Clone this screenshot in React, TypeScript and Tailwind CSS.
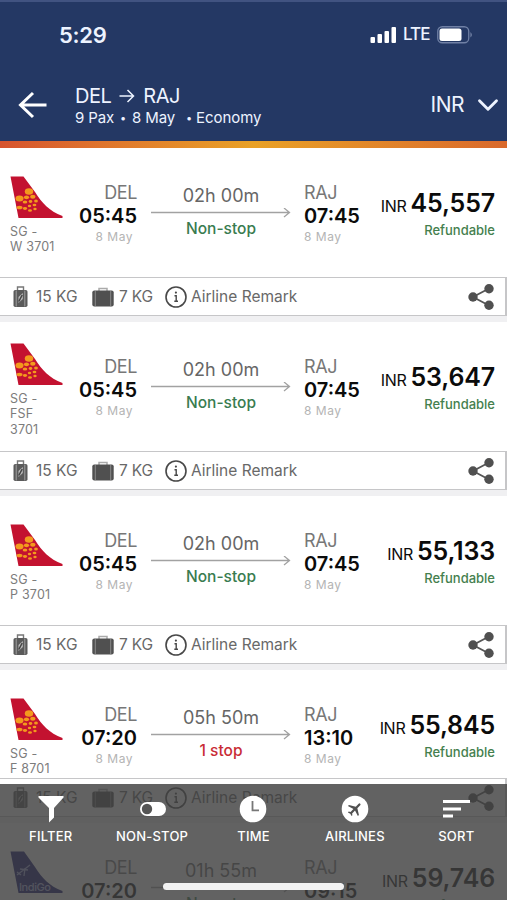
import React from "react";
import { ChevronDown } from "lucide-react";

type Flight = {
  code: string[];
  dep: string;
  arr: string;
  duration: string;
  stops: string;
  price: string;
  bodyClass: string;
  logoClass: string;
  indigo?: boolean;
};

const flights: Flight[] = [
  { code: ["SG -", "W 3701"], dep: "05:45", arr: "07:45", duration: "02h 00m", stops: "Non-stop", price: "45,557", bodyClass: "h-[129px]", logoClass: "pt-7" },
  { code: ["SG -", "FSF", "3701"], dep: "05:45", arr: "07:45", duration: "02h 00m", stops: "Non-stop", price: "53,647", bodyClass: "h-[129px]", logoClass: "pt-[21px]" },
  { code: ["SG -", "P 3701"], dep: "05:45", arr: "07:45", duration: "02h 00m", stops: "Non-stop", price: "55,133", bodyClass: "h-[129px]", logoClass: "pt-7" },
  { code: ["SG -", "F 8701"], dep: "07:20", arr: "13:10", duration: "05h 50m", stops: "1 stop", price: "55,845", bodyClass: "h-[108px]", logoClass: "pt-7" },
  { code: [], dep: "07:20", arr: "09:15", duration: "01h 55m", stops: "Non-stop", price: "59,746", bodyClass: "h-[129px]", logoClass: "pt-7", indigo: true },
];

function SpiceTail() {
  return (
    <svg width="53" height="43" viewBox="0 0 53 43">
      <path d="M0.500 0.500H13.500L25 16C32 27 39 35 52.500 40V42H8.500Z" fill="#c31230" />
      <g fill="#f39a1d">
        <ellipse cx="19" cy="15.500" rx="4.200" ry="3.200" />
        <ellipse cx="9.500" cy="22.500" rx="4" ry="3" />
        <ellipse cx="16.500" cy="21.300" rx="2.600" ry="1.900" />
        <ellipse cx="22.800" cy="20.800" rx="2.700" ry="2" />
        <ellipse cx="15" cy="26" rx="2.300" ry="1.600" />
        <ellipse cx="20.500" cy="25.500" rx="1.800" ry="1.400" />
        <ellipse cx="26" cy="25" rx="1.900" ry="1.600" />
        <ellipse cx="9.500" cy="31.500" rx="3" ry="1.800" />
        <ellipse cx="24.500" cy="29" rx="1.900" ry="1.300" />
        <ellipse cx="19.500" cy="30" rx="1.700" ry="1.300" />
        <ellipse cx="15" cy="32.500" rx="2.100" ry="1.400" />
        <ellipse cx="20" cy="34.500" rx="2" ry="1.300" />
        <ellipse cx="25" cy="33" rx="1.700" ry="1.200" />
      </g>
    </svg>
  );
}

function IndigoTail() {
  return (
    <svg width="53" height="43" viewBox="0 0 53 43">
      <path d="M0.500 0.500H14L25 16C32 27 39 35 52.500 40V42H8.500Z" fill="#10106f" />
      <path d="M7 24L20 14M10 18L18 19M15 17L14 25M7 21L11 24" stroke="#9aa3da" strokeWidth="1.300" fill="none" />
      <text x="9" y="40" fontFamily="Inter, sans-serif" fontSize="11" fontWeight="500" fill="#aab0e4" textLength="32">IndiGo</text>
    </svg>
  );
}

function CheckedBag() {
  return (
    <svg width="15" height="22" viewBox="0 0 15 22">
      <path d="M4.500 4.500V1H10.500V4.500" fill="none" stroke="#777" strokeWidth="1.400" />
      <rect x="0.500" y="4" width="14" height="17" rx="1.800" fill="#5a5a5a" />
      <path d="M3.200 4.500V20.500M11.800 4.500V20.500" stroke="#a8a8a8" strokeWidth="0.900" />
      <path d="M9.800 7L5.500 11V17L9.800 13Z" fill="#bdbdbd" />
      <path d="M5.800 15.500L9.200 9" stroke="#444" strokeWidth="1.600" />
    </svg>
  );
}

function CabinBag() {
  return (
    <svg width="22" height="20" viewBox="0 0 22 20">
      <path d="M7 4V1.500H15V4" fill="none" stroke="#aaa" strokeWidth="1.500" />
      <rect x="0.300" y="3.500" width="21.400" height="16" rx="2" fill="#505050" />
      <path d="M3.300 4V19.500M18.700 4V19.500" stroke="#999" strokeWidth="0.800" />
    </svg>
  );
}

function InfoIcon() {
  return (
    <svg width="22" height="22" viewBox="0 0 22 22">
      <circle cx="11" cy="11" r="10" fill="none" stroke="#484848" strokeWidth="1.600" />
      <circle cx="10.900" cy="6.600" r="1.100" fill="#484848" />
      <path d="M9.500 9.700H11.200V15.300M9.300 15.300H13" fill="none" stroke="#484848" strokeWidth="1.400" />
    </svg>
  );
}

function ShareIcon() {
  return (
    <svg width="28" height="28" viewBox="0 0 28 28">
      <path d="M22 5.500L6 14L22 22.500" fill="none" stroke="#555" strokeWidth="1.800" />
      <g fill="#505050">
        <circle cx="22" cy="5.700" r="4.700" />
        <circle cx="6" cy="14" r="4.700" />
        <circle cx="22" cy="22.300" r="4.700" />
      </g>
    </svg>
  );
}

function FlightCard({ f }: { f: Flight }) {
  return (
    <article className="shrink-0 border-b-[6px] border-[#f0f0f2] bg-white">
      <div className={`flex overflow-hidden pl-[10px] pr-3 ${f.bodyClass}`}>
        <div className={`w-[58px] shrink-0 ${f.logoClass}`}>
          {f.indigo ? <IndigoTail /> : <SpiceTail />}
          <div className="pt-[5px] text-[12.500px] leading-[15.300px] tracking-[0.200px] text-[#7c7c7c]">
            {f.code.map((line) => (
              <div key={line}>{line}</div>
            ))}
          </div>
        </div>
        <div className="flex w-[69px] shrink-0 flex-col items-end pt-[34px]">
          <span className="text-[18px] leading-[22px] tracking-[-0.400px] text-[#777]">DEL</span>
          <span className="text-[20px] font-semibold leading-6 text-[#0b0b0b]">{f.dep}</span>
          <span className="pr-1 pt-[1px] text-[12px] leading-4 tracking-[0.500px] text-[#b4b4b4]">8 May</span>
        </div>
        <div className="ml-[14px] flex w-[140px] shrink-0 flex-col items-center pt-[37px]">
          <span className="text-[18px] leading-[22px] text-[#666]">{f.duration}</span>
          <svg className="my-[1px] shrink-0" width="140" height="10" viewBox="0 0 140 10">
            <path d="M0 4.500H138M133 0L138.500 4.500L133 9" fill="none" stroke="#a2a2a2" strokeWidth="1.300" />
          </svg>
          <span className={`text-[15.500px] font-medium leading-[20px] ${f.stops === "1 stop" ? "text-[#c92d36]" : "text-[#397c50]"}`}>{f.stops}</span>
        </div>
        <div className="ml-[13px] flex w-[64px] shrink-0 flex-col items-start pt-[34px]">
          <span className="text-[18px] leading-[22px] tracking-[-0.400px] text-[#777]">RAJ</span>
          <span className="text-[20px] font-semibold leading-6 text-[#0b0b0b]">{f.arr}</span>
          <span className="pt-[1px] text-[12px] leading-4 tracking-[0.500px] text-[#b4b4b4]">8 May</span>
        </div>
        <div className="flex grow flex-col items-end pt-10">
          <div className="flex items-baseline gap-1 whitespace-nowrap leading-[30px] text-[#0b0b0b]">
            <span className="text-[16px] tracking-[-0.300px]">INR</span>
            <span className="text-[25px] font-semibold tracking-[-0.150px]">{f.price}</span>
          </div>
          <span className="pt-[1px] text-[13px] font-medium leading-4 text-[#457f4e]">Refundable</span>
        </div>
      </div>
      <div className="flex h-[39px] items-center border-y border-r-2 border-[#c6c6c8] pl-[13px] pr-[10px] pt-px text-[15.500px] text-[#686868]">
        <CheckedBag />
        <span className="ml-2 w-[56px] whitespace-nowrap">15 KG</span>
        <CabinBag />
        <span className="ml-[5px] w-[46px] whitespace-nowrap tracking-[-0.200px]">7 KG</span>
        <InfoIcon />
        <span className="ml-1 grow">Airline Remark</span>
        <ShareIcon />
      </div>
    </article>
  );
}

const tabs: { label: string; icon: React.ReactNode }[] = [
  {
    label: "FILTER",
    icon: (
      <svg width="26" height="28" viewBox="0 0 26 28">
        <path d="M0.500 1H25.500V2.500L16 13V22.500L11 27.500V13L0.500 2.500Z" fill="#fff" />
      </svg>
    ),
  },
  {
    label: "NON-STOP",
    icon: (
      <svg className="ml-[2px]" width="28" height="28" viewBox="0 0 28 28">
        <rect x="1" y="7" width="26" height="14" rx="7" fill="#fff" />
        <circle cx="8" cy="14" r="5.200" fill="#555" />
      </svg>
    ),
  },
  {
    label: "TIME",
    icon: (
      <svg width="28" height="28" viewBox="0 0 28 28">
        <circle cx="14" cy="14" r="13.300" fill="#fff" />
        <path d="M13.500 6V15.300H20" fill="none" stroke="#777" strokeWidth="1.800" />
      </svg>
    ),
  },
  {
    label: "AIRLINES",
    icon: (
      <svg width="28" height="28" viewBox="0 0 28 28">
        <circle cx="14" cy="14" r="13.300" fill="#fff" />
        <g transform="translate(14 14) rotate(45) scale(.74) translate(-11.500 -12)">
          <path d="M21 16v-2l-8-5V3.500a1.500 1.500 0 0 0-3 0V9l-8 5v2l8-2.500V19l-2 1.500V22l3.500-1 3.500 1v-1.500L13 19v-5.500Z" fill="#505050" />
        </g>
      </svg>
    ),
  },
  {
    label: "SORT",
    icon: (
      <svg width="27" height="28" viewBox="0 0 27 28">
        <path d="M0 6.500H27M0 14H18M0 21H10" stroke="#fff" strokeWidth="3" />
      </svg>
    ),
  },
];

export default function App() {
  return (
    <div className="relative flex h-[900px] w-[507px] flex-col overflow-hidden bg-white font-['Inter','Liberation_Sans',sans-serif]">
      <header className="h-[141px] shrink-0 border-t-2 border-[#415381] bg-[#243864] text-[#edf3ff]">
        <div className="flex h-[66px] items-center pl-[59px] pr-[34px]">
          <span className="grow text-[22px] font-semibold leading-7 tracking-[-0.300px]">5:29</span>
          <svg width="27" height="18" viewBox="0 0 27 18" fill="#fff">
            <rect x="0.500" y="11" width="4.500" height="6" rx="1" />
            <rect x="7.500" y="8" width="4.500" height="9" rx="1" />
            <rect x="14.500" y="5" width="4.500" height="12" rx="1" />
            <rect x="21.500" y="1" width="4.500" height="16" rx="1" />
          </svg>
          <span className="ml-[6px] w-[34px] text-[17px] font-medium tracking-[-0.900px]">LTE</span>
          <svg width="36" height="18" viewBox="0 0 36 18">
            <rect x="0.750" y="0.750" width="31" height="16" rx="4.500" fill="none" stroke="#7080a5" strokeWidth="1.300" />
            <rect x="2.500" y="2.500" width="22" height="12.500" rx="2.500" fill="#fff" />
            <path d="M33.500 6V11.500Q36 9 33.500 6" fill="#8290b2" />
          </svg>
        </div>
        <div className="flex h-[73px] items-center pl-[18px] pr-[9px]">
          <svg width="30" height="28" viewBox="0 0 30 28" className="shrink-0">
            <path d="M28.500 14H2.500M15 2L2.500 14L15 26" fill="none" stroke="#fff" strokeWidth="3" />
          </svg>
          <div className="ml-[27px] grow pt-[3px]">
            <div className="flex items-center text-[20px] leading-6 tracking-[-0.500px]">
              <span>DEL</span>
              <svg className="mx-2" width="16" height="14" viewBox="0 0 16 14">
                <path d="M0.500 7H14.500M8.500 1L14.500 7L8.500 13" fill="none" stroke="currentColor" strokeWidth="1.500" />
              </svg>
              <span>RAJ</span>
            </div>
            <div className="flex text-[15px] leading-5 tracking-[0.200px]">
              <span className="w-[45px] whitespace-nowrap tracking-[-0.100px]">9 Pax</span>
              <span className="w-[12px] text-[11px]">•</span>
              <span className="w-[54px] whitespace-nowrap tracking-[-0.100px]">8 May</span>
              <span className="w-[10px] text-[11px]">•</span>
              <span className="tracking-[-0.050px]">Economy</span>
            </div>
          </div>
          <span className="text-[21px] tracking-[-0.500px]">INR</span>
          <ChevronDown size={34} strokeWidth={2} className="ml-[7px] -mr-[7px]" />
        </div>
      </header>
      <div className="h-[7px] shrink-0 bg-linear-to-r from-[#d6532e] via-[#e9a126] to-[#d9682b]" />
      <main className="flex flex-col">
        {flights.map((f) => (
          <FlightCard key={f.price} f={f} />
        ))}
      </main>
      <nav className="absolute inset-x-0 bottom-0 flex h-[116px] flex-col bg-[#404040]/82 text-white">
        <div className="grid grid-cols-5 pt-[11px]">
          {tabs.map((tab) => (
            <div key={tab.label} className="flex flex-col items-center">
              {tab.icon}
              <span className="pt-[4px] text-[13px] font-medium leading-[18px] tracking-[0.200px]">{tab.label}</span>
            </div>
          ))}
        </div>
        <div className="mx-auto mt-auto mb-[10px] h-[7px] w-[181px] rounded-full bg-[#f2f2f2]" />
      </nav>
    </div>
  );
}
